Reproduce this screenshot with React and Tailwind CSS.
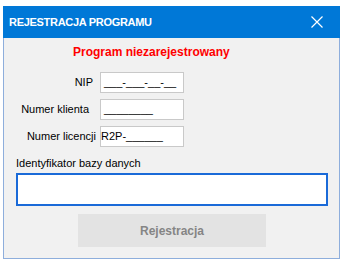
import React from "react";

const font = { fontFamily: '"Liberation Sans", Arial, sans-serif' };

const Row = ({ label, pr, value, pl }) => (
  <div className="flex items-center h-[21px]">
    <div className={`w-[96px] text-right text-[11px] text-black ${pr}`}>{label}</div>
    <div className={`w-[84px] h-[21px] bg-white border border-[#c9c9c9] flex items-center text-[11px] text-black leading-none ${pl}`}>
      {value}
    </div>
  </div>
);

export default function App() {
  return (
    <div className="w-[343px] h-[262px] bg-white pl-[3px] pt-[6px]" style={font}>
      <div className="w-[337px] h-[253px] flex flex-col">
        <div className="h-[32px] bg-[#0078d7] flex items-center justify-between pl-[6px] pr-[17px]">
          <span className="text-white font-bold text-[11px] tracking-[-0.3px]">REJESTRACJA PROGRAMU</span>
          <svg width="12" height="12" viewBox="0 0 12 12">
            <path d="M0.5 0.5 L11.5 11.5 M11.5 0.5 L0.5 11.5" stroke="white" strokeWidth="1.2" />
          </svg>
        </div>
        <div className="flex-1 bg-[#f1f1f1] border-x border-b border-[#8eaedc] flex flex-col pt-[7px]">
          <div className="pl-[69px] h-[14px] leading-[14px] text-[12px] font-bold text-[#ff0000]">
            Program niezarejestrowany
          </div>
          <div className="mt-[13px] flex flex-col gap-[6px]">
            <Row label="NIP" pr="pr-[7px]" value="___-___-__-__" pl="pl-[3px]" />
            <Row label="Numer klienta" pr="pr-[11px]" value="________" pl="pl-[3px]" />
            <Row label="Numer licencji" pr="pr-[4px]" value="R2P-______" pl="pl-[0px]" />
          </div>
          <div className="mt-[9px] pl-[12px] h-[14px] leading-[14px] text-[11px] text-black">
            Identyfikator bazy danych
          </div>
          <div className="mt-[3px] ml-[12px] w-[312px] h-[33px] bg-white border-2 border-[#1a6ad8]" />
          <div className="mt-[8px] ml-[74px] w-[188px] h-[33px] bg-[#e3e3e3] flex items-center justify-center text-[12px] font-bold text-[#858585]">
            Rejestracja
          </div>
        </div>
      </div>
    </div>
  );
}
